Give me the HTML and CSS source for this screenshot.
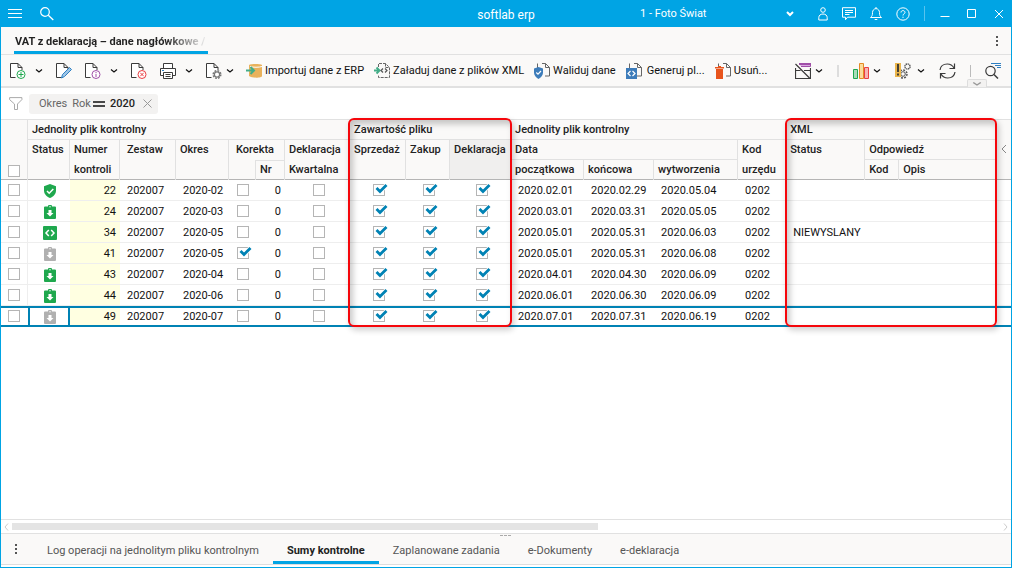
FILE: index.html
```html
<!DOCTYPE html>
<html lang="pl">
<head>
    <meta charset="UTF-8">
    <title>softlab erp</title>
    <link rel="stylesheet" href="styles.css">
</head>
<body>
    <!-- Shared icons -->
    <svg class="sprite" aria-hidden="true">
        <symbol id="doc" viewBox="0 0 16 16"><path d="M5.500 14.500h-5V.5H8l4 4V7M8 .5v4h4" fill="#fff" stroke="#3b3b3b"/></symbol>
        <symbol id="half-doc" viewBox="0 0 16 16"><path d="M3.500 5V.5M8 .5h3.500l4 4v8.500H11M11.500 .5v4h4" fill="none" stroke="#666"/></symbol>
        <symbol id="chevron" viewBox="0 0 8 8"><path d="M1 2.500l3 2.500 3-2.500" fill="none" stroke="currentColor" stroke-width="1.200"/></symbol>
        <symbol id="dots" viewBox="0 0 4 12"><path d="M1 1h2v2H1zM1 5h2v2H1zM1 9h2v2H1z" fill="#555"/></symbol>
        <symbol id="shield" viewBox="0 0 14 14"><path d="M7 0l6 2.300v4.200c0 3.500-2.500 6.300-6 7.500-3.500-1.200-6-4-6-7.500V2.300z" fill="#1fa84e"/><path d="M4 7l2.200 2.200L10.300 5" fill="none" stroke="#fff" stroke-width="1.500"/></symbol>
        <symbol id="clip" viewBox="0 0 14 14"><path d="M2 1.500h3a2 2 0 0 1 4 0h3a1 1 0 0 1 1 1V13a1 1 0 0 1-1 1H2a1 1 0 0 1-1-1V2.500a1 1 0 0 1 1-1z" fill="currentColor"/><path d="M5.500 5h3v3h2L7 11.500 3.500 8h2z" fill="#fff"/><circle cx="7" cy="1.800" r=".7" fill="#fff"/></symbol>
        <symbol id="code" viewBox="0 0 14 14"><rect width="14" height="14" rx="1" fill="#1fa84e"/><path d="M5.800 4L3 7l2.800 3M8.200 4L11 7l-2.800 3" fill="none" stroke="#fff" stroke-width="1.500"/></symbol>
    </svg>

    <div class="window">
        <header class="titlebar">
            <div class="title-left">
                <button class="icon-btn" aria-label="Menu"><svg width="14" height="12" viewBox="0 0 14 12"><path d="M0 1.500h14M0 5.500h14M0 9.500h14" stroke="#fff"/></svg></button>
                <button class="icon-btn" aria-label="Szukaj"><svg width="14" height="14" viewBox="0 0 14 14"><circle cx="5" cy="5" r="4.300" fill="none" stroke="#fff" stroke-width="1.200"/><path d="M8.300 8.300l5 4.700" stroke="#fff" stroke-width="1.300"/></svg></button>
            </div>
            <div class="app-name">softlab erp</div>
            <div class="title-right">
                <select class="company" aria-label="Firma"><option>1 - Foto Świat</option></select>
                <button class="icon-btn" aria-label="Użytkownik"><svg width="10" height="14" viewBox="0 0 10 14" fill="none" stroke="#fff"><circle cx="5" cy="3" r="2.300"/><path d="M.8 13v-2.500C.8 8.500 2.500 7 5 7s4.200 1.500 4.200 3.500V13z"/></svg></button>
                <button class="icon-btn" aria-label="Wiadomości"><svg width="14" height="14" viewBox="0 0 14 14" fill="none" stroke="#fff"><path d="M.5 .7h13v9.500H5.500L3.500 12.700v-2.500h-3zM3 3.500h8M3 5.500h8M3 7.500h4.500"/></svg></button>
                <button class="icon-btn" aria-label="Powiadomienia"><svg width="12" height="14" viewBox="0 0 12 14" fill="none" stroke="#fff"><path d="M.5 10.500c1.500-1.200 2-2 2-5C2.500 3.500 4 1.600 6 1.600s3.500 1.900 3.500 3.900c0 3 .5 3.800 2 5zM4.700 12.500h2.600M6 0v1.500"/></svg></button>
                <button class="icon-btn" aria-label="Pomoc"><svg width="14" height="14" viewBox="0 0 14 14" fill="none" stroke="#fff"><circle cx="7" cy="7" r="6.200"/><path d="M5 5.500C5 4.300 5.900 3.600 7 3.600s2 .8 2 1.800C9 6.800 7 6.800 7 8.500M7 9.700v1.200"/></svg></button>
                <span class="title-sep"></span>
                <button class="icon-btn win" aria-label="Minimalizuj"><svg width="10" height="10" viewBox="0 0 10 10"><path d="M.5 7.500h9" stroke="#fff"/></svg></button>
                <button class="icon-btn win" aria-label="Maksymalizuj"><svg width="10" height="10" viewBox="0 0 10 10"><path d="M.5 .5h8v8h-8z" fill="none" stroke="#fff"/></svg></button>
                <button class="icon-btn win" aria-label="Zamknij"><svg width="10" height="10" viewBox="0 0 10 10"><path d="M1 1l8 8M9 1L1 9" stroke="#fff"/></svg></button>
            </div>
        </header>

        <nav class="tabbar">
            <a href="#" class="page-tab"><span>VAT z deklaracją – dane nagłówkowe /</span></a>
            <button class="icon-btn" aria-label="Więcej"><svg width="4" height="12"><use href="#dots"/></svg></button>
        </nav>

        <div class="toolbar">
            <div class="tools">
                <button class="tool split" aria-label="Dodaj"><svg width="16" height="16" viewBox="0 0 16 16"><use href="#doc"/><circle cx="11" cy="11.500" r="4" fill="#fff" stroke="#1fa84e"/><path d="M11 9v5M8.500 11.500h5" stroke="#1fa84e"/></svg><svg width="8" height="8"><use href="#chevron"/></svg></button>
                <button class="tool" aria-label="Edytuj"><svg width="16" height="16" viewBox="0 0 16 16"><use href="#doc"/><path d="M5.500 15l1-3.500 7-7 2 2-7 7z" fill="#9cc5e8" stroke="#2f7fc1"/></svg></button>
                <button class="tool split" aria-label="Informacje"><svg width="16" height="16" viewBox="0 0 16 16"><use href="#doc"/><circle cx="11" cy="11.500" r="4" fill="#fff" stroke="#a04fa8"/><path d="M11 9v1.200M11 11v3" stroke="#a04fa8"/></svg><svg width="8" height="8"><use href="#chevron"/></svg></button>
                <button class="tool" aria-label="Usuń dokument"><svg width="16" height="16" viewBox="0 0 16 16"><use href="#doc"/><circle cx="11" cy="11.500" r="4" fill="#fff" stroke="#ea3f43"/><path d="M9.300 9.800l3.400 3.400M12.700 9.800l-3.400 3.400" stroke="#ea3f43"/></svg></button>
                <button class="tool split" aria-label="Drukuj"><svg width="16" height="16" viewBox="0 0 16 16" fill="#fff" stroke="#3b3b3b"><path d="M3.500 5V.5h9V5M3.500 12.500h-3v-7h15v7h-3"/><path d="M3.500 9.500h9v6h-9zM5.500 11.500h5M5.500 13.500h5"/><path d="M2 7.500h2" stroke="#2f7fc1"/></svg><svg width="8" height="8"><use href="#chevron"/></svg></button>
                <button class="tool split close" aria-label="Ustawienia dokumentu"><svg width="16" height="16" viewBox="0 0 16 16"><use href="#doc"/><circle cx="11" cy="11.500" r="3.800" fill="none" stroke="#777" stroke-width="1.500" stroke-dasharray="1.800 1.180"/><circle cx="11" cy="11.500" r="2.600" fill="#fff" stroke="#777" stroke-width="1.200"/></svg><svg width="8" height="8"><use href="#chevron"/></svg></button>
            </div>
            <div class="tools actions">
                <button class="tool"><svg width="16" height="16" viewBox="0 0 16 16"><path d="M3 2c0-1.500 13-1.500 13 0v11c0 2-10 2.500-13 0z" fill="#e9b25c"/><path d="M4 3.500c3 1 9 1 12 0" fill="none" stroke="#fff"/><path d="M0 7.500h7M4.500 4L8 7.500 4.500 11" fill="none" stroke="#44ad88" stroke-width="2"/></svg>Importuj dane z ERP</button>
                <button class="tool"><svg width="16" height="16" viewBox="0 0 16 16"><path d="M4.500 4V.5h7l4 4v10h-11V12M11.500 .5v4h4" fill="none" stroke="#666" stroke-dasharray="3 1"/><path d="M0 7.500h5M2.500 4.500l3 3-3 3" fill="none" stroke="#44ad88" stroke-width="2"/><path d="M9 5.500l-2 2 2 2M11 5.500l2 2-2 2" fill="none" stroke="#555" stroke-width="1.200"/></svg>Załaduj dane z plików XML</button>
                <button class="tool"><svg width="16" height="16" viewBox="0 0 16 16"><use href="#half-doc"/><path d="M4.500 4L9 5.500v4c0 3-2 5-4.500 6.500C2 14.500 0 12.500 0 9.500v-4z" fill="#3d7cba"/><path d="M2.300 9.500l1.700 1.700L7 8" fill="none" stroke="#fff" stroke-width="1.200"/></svg>Waliduj dane</button>
                <button class="tool wide"><svg width="16" height="16" viewBox="0 0 16 16"><use href="#half-doc"/><path d="M0 5h11v11H0z" fill="#3d7cba"/><path d="M4.500 8L2 10.500 4.500 13M6.500 8L9 10.500 6.500 13" fill="none" stroke="#fff" stroke-width="1.200"/></svg>Generuj pl...</button>
                <button class="tool"><svg width="16" height="16" viewBox="0 0 16 16"><use href="#half-doc"/><path d="M0 4h3V3h3v1h3v1.500H0zM1 6h7v10H1z" fill="#e8541c"/></svg>Usuń...</button>
            </div>
            <div class="tools extra">
                <button class="tool split close" aria-label="Widok"><svg width="16" height="16" viewBox="0 0 16 16"><path d="M4 .5h11.500v3H6" fill="#d9a9e0" stroke="#a04fa8"/><path d="M4 1h12" stroke="#a04fa8" stroke-width="2"/><path d="M.5 5v10.500h15V5M.5 7.500h5M9 7.500h6.500M.5 1l14 14" fill="none" stroke="#3b3b3b" stroke-width="1.200"/></svg><svg width="8" height="8"><use href="#chevron"/></svg></button>
                <span class="sep thick"></span>
                <button class="tool split close" aria-label="Wykresy"><svg width="16" height="16" viewBox="0 0 16 16"><path d="M.5 6.500h4v9h-4z" fill="#a9dbb9" stroke="#1fa84e"/><path d="M6.500 .5h4v15h-4z" fill="#fbdc9c" stroke="#e58a25"/><path d="M11.500 4.500h4v11h-4z" fill="#f7b3b3" stroke="#ea3f43"/></svg><svg width="8" height="8"><use href="#chevron"/></svg></button>
                <button class="tool split gears" aria-label="Narzędzia"><svg width="16" height="16" viewBox="0 0 16 16"><circle cx="8" cy="11" r="4" fill="none" stroke="#555" stroke-width="1.500" stroke-dasharray="1.900 1.200"/><circle cx="8" cy="11" r="2.300" fill="none" stroke="#555"/><circle cx="12.500" cy="3.500" r="2.600" fill="none" stroke="#555" stroke-width="1.400" stroke-dasharray="1.400 .6"/><path d="M0 0h6v14H0z" fill="#ebb64c"/><path d="M3 1v8M3 10.500v2" stroke="#333" stroke-width="1.800"/></svg><svg width="8" height="8"><use href="#chevron"/></svg></button>
                <button class="tool" aria-label="Odśwież"><svg width="17" height="16" viewBox="0 0 17 16" fill="none" stroke="#3b3b3b" stroke-width="1.200"><path d="M1 7C1.500 3.300 4.500 1 8.300 1c3 0 5.300 1.500 6.700 4M15.500 .5V5.500h-5M16 9c-.5 3.700-3.500 6-7.300 6-3 0-5.300-1.500-6.700-4M1.500 15.500v-5h5"/></svg></button>
                <span class="sep"></span>
                <button class="tool" aria-label="Wyszukiwanie"><svg width="16" height="16" viewBox="0 0 16 16"><circle cx="5.500" cy="8" r="4.700" fill="none" stroke="#3b3b3b" stroke-width="1.200"/><path d="M9 11.500l4 4" stroke="#3b3b3b" stroke-width="1.500"/><path d="M6 .5h10M10 2.500h6M12 4.500h4" stroke="#2f7fc1"/></svg></button>
            </div>
            <button class="collapse" aria-label="Zwiń"><svg width="10" height="8" viewBox="0 0 8 8" preserveAspectRatio="none"><use href="#chevron"/></svg></button>
        </div>

        <div class="filters">
            <svg width="14" height="14" viewBox="0 0 14 14"><path d="M.6 .6h12.300v2L8.500 7v5.500H5.500V7L.6 2.600z" fill="none" stroke="#aaa"/></svg>
            <div class="chip">
                <span>Okres</span><span class="chip-field">Rok</span>
                <svg width="12" height="6" viewBox="0 0 12 6"><path d="M0 1h12M0 5h12" stroke="#111" stroke-width="1.300"/></svg>
                <b>2020</b>
                <button class="icon-btn" aria-label="Usuń filtr"><svg width="9" height="9" viewBox="0 0 9 9"><path d="M.5 .5l8 8M8.500 .5l-8 8" stroke="#999"/></svg></button>
            </div>
        </div>

        <main class="grid">
            <table>
                <colgroup>
                    <col class="w27"><col class="w42"><col class="w50"><col class="w56"><col class="w53"><col class="w26"><col class="w30"><col class="w65">
                    <col class="w56"><col class="w44"><col class="w61">
                    <col class="w73"><col class="w70"><col class="w84"><col class="w48">
                    <col class="w79"><col class="w34"><col class="w98"><col>
                </colgroup>
                <thead>
                    <tr>
                        <th rowspan="3" class="pick-all"><input type="checkbox" aria-label="Zaznacz wszystko"></th>
                        <th colspan="7" class="group">Jednolity plik kontrolny</th>
                        <th colspan="3" class="group">Zawartość pliku</th>
                        <th colspan="4" class="group">Jednolity plik kontrolny</th>
                        <th colspan="3" class="group">XML</th>
                        <th rowspan="3" class="more"><svg width="6" height="10" viewBox="0 0 6 10"><path d="M5 1L1 5l4 4" fill="none" stroke="#888"/></svg></th>
                    </tr>
                    <tr>
                        <th rowspan="2">Status</th>
                        <th rowspan="2">Numer<br>kontroli</th>
                        <th rowspan="2" class="inset">Zestaw</th>
                        <th rowspan="2">Okres</th>
                        <th colspan="2" class="inset">Korekta</th>
                        <th rowspan="2" class="last">Deklaracja<br>Kwartalna</th>
                        <th rowspan="2">Sprzedaż</th>
                        <th rowspan="2">Zakup</th>
                        <th rowspan="2" class="active last">Deklaracja</th>
                        <th colspan="3" class="line">Data</th>
                        <th rowspan="2" class="last">Kod<br>urzędu</th>
                        <th rowspan="2">Status</th>
                        <th colspan="2" class="line last">Odpowiedź</th>
                    </tr>
                    <tr>
                        <th></th>
                        <th class="sub">Nr</th>
                        <th>początkowa</th>
                        <th>końcowa</th>
                        <th>wytworzenia</th>
                        <th>Kod</th>
                        <th class="last">Opis</th>
                    </tr>
                </thead>
                <tbody id="rows"></tbody>
            </table>
            <div class="mark mark-content"></div>
            <div class="mark mark-xml"></div>
        </main>

        <div class="scrollbar">
            <svg width="5" height="8" viewBox="0 0 5 8"><path d="M4 .5L1 4l3 3.500" fill="none" stroke="#ccc"/></svg>
            <div class="track"><div class="thumb"></div></div>
            <svg width="5" height="8" viewBox="0 0 5 8"><path d="M1 .5L4 4 1 7.500" fill="none" stroke="#ccc"/></svg>
        </div>

        <nav class="bottom-tabs">
            <button class="icon-btn" aria-label="Więcej zakładek"><svg width="4" height="12"><use href="#dots"/></svg></button>
            <a href="#">Log operacji na jednolitym pliku kontrolnym</a>
            <a href="#" class="current">Sumy kontrolne</a>
            <a href="#">Zaplanowane zadania</a>
            <a href="#">e-Dokumenty</a>
            <a href="#">e-deklaracja</a>
            <svg class="splitter" width="11" height="2" viewBox="0 0 11 2"><path d="M0 .5h3M4 .5h3M8 .5h3" stroke="#aaa"/></svg>
        </nav>
    </div>

    <script>
        // status icon, number, period, correction, from, to, created, XML status
        const data = [
            ['shield', 22, '2020-02', false, '2020.02.01', '2020.02.29', '2020.05.04', ''],
            ['clip', 24, '2020-03', false, '2020.03.01', '2020.03.31', '2020.05.05', ''],
            ['code', 34, '2020-05', false, '2020.05.01', '2020.05.31', '2020.06.03', 'NIEWYSLANY'],
            ['clip off', 41, '2020-05', true, '2020.05.01', '2020.05.31', '2020.06.08', ''],
            ['clip', 43, '2020-04', false, '2020.04.01', '2020.04.30', '2020.06.09', ''],
            ['clip', 44, '2020-06', false, '2020.06.01', '2020.06.30', '2020.06.09', ''],
            ['clip off', 49, '2020-07', false, '2020.07.01', '2020.07.31', '2020.06.19', '']
        ];

        function box(label, checked) {
            return `<td class="check"><input type="checkbox" aria-label="${label}" ${checked ? 'checked' : ''}></td>`;
        }

        document.getElementById('rows').innerHTML = data.map((row, i) => {
            const [icon, number, period, correction, from, to, created, status] = row;
            return `<tr class="${i === data.length - 1 ? 'selected' : ''}">
                <td class="pick"><input type="checkbox" aria-label="Zaznacz ${number}"></td>
                <td class="status"><svg class="${icon}" width="14" height="14"><use href="#${icon.split(' ')[0]}"/></svg></td>
                <td class="number">${number}</td>
                <td>202007</td>
                <td>${period}</td>
                ${box('Korekta', correction)}
                <td class="right">0</td>
                ${box('Deklaracja kwartalna', false)}
                ${box('Sprzedaż', true)}
                ${box('Zakup', true)}
                ${box('Deklaracja', true)}
                <td>${from}</td>
                <td>${to}</td>
                <td>${created}</td>
                <td>0202</td>
                <td colspan="3">${status}</td>
                <td></td>
            </tr>`;
        }).join('');
    </script>
</body>
</html>
```
FILE: styles.css
```css
* {
    box-sizing: border-box;
}

body {
    margin: 0;
    font-family: Roboto, "Liberation Sans", sans-serif;
    font-size: 11px;
    color: #111111;
}

button {
    font: inherit;
    color: inherit;
    background: none;
    border: none;
    padding: 0;
    cursor: pointer;
}

a {
    color: inherit;
    text-decoration: none;
}

svg {
    display: block;
    flex: none;
}

.sprite {
    position: absolute;
    width: 0;
    height: 0;
}

.window {
    display: flex;
    flex-direction: column;
    min-height: 100vh;
    border: 1px solid #00a4e4;
    border-top: none;
    background-color: #ffffff;
}

/* Title bar */
.titlebar {
    display: grid;
    grid-template-columns: 1fr auto 1fr;
    align-items: center;
    height: 27px;
    padding: 0 7px;
    background-color: #00a4e4;
    color: #ffffff;
}

.title-left {
    display: flex;
    align-items: center;
    gap: 18px;
}

.app-name {
    font-size: 12px;
    padding-top: 2px;
}

.title-right {
    display: flex;
    align-items: center;
    justify-content: flex-end;
    gap: 14px;
}

.company {
    width: 158px;
    margin-right: 6px;
    padding: 0;
    border: none;
    appearance: none;
    font: inherit;
    color: #ffffff;
    background: url("data:image/svg+xml,%3Csvg xmlns='http://www.w3.org/2000/svg' width='8' height='8'%3E%3Cpath d='M1 2l3 3 3-3' fill='none' stroke='white' stroke-width='2'/%3E%3C/svg%3E") no-repeat right 4px center;
}

.title-sep {
    width: 1px;
    height: 15px;
    margin-right: 1px;
    background-color: #58c3ee;
}

.win {
    margin-right: 3px;
}

.win:last-child {
    margin-right: 0;
}

/* Page tab */
.tabbar {
    display: flex;
    justify-content: space-between;
    align-items: center;
    height: 28px;
    padding: 0 12px 0 13px;
    background-color: #faf9f8;
    border-bottom: 1px solid #e1e1e1;
}

.page-tab {
    width: 194px;
    height: 27px;
    padding-left: 1px;
    line-height: 29px;
    border-bottom: 3px solid #00a4e4;
    font-weight: bold;
    white-space: nowrap;
    overflow: hidden;
}

.page-tab span {
    background: linear-gradient(90deg, #222222 150px, #e8e8e8 190px);
    background-clip: text;
    color: transparent;
}

/* Toolbar */
.toolbar {
    position: relative;
    display: flex;
    align-items: center;
    gap: 12px;
    height: 33px;
    padding: 0 10px 0 9px;
    background-color: #faf9f8;
    border-bottom: 2px solid #e1e1e1;
}

.tools {
    display: flex;
    align-items: center;
    gap: 13px;
}

.tools.actions {
    gap: 10px;
}

.tools.extra {
    gap: 14px;
    margin-left: auto;
}

.tool {
    display: flex;
    align-items: center;
    gap: 3px;
    white-space: nowrap;
}

.tool.split {
    gap: 9px;
}

.tool.wide {
    gap: 5px;
}

.tool.split.close {
    gap: 4px;
}

.tool.split.gears {
    gap: 6px;
}

.sep {
    width: 1px;
    height: 12px;
    background-color: #bbbbbb;
}

.sep.thick {
    width: 2px;
    background-color: #dddddd;
}

.collapse {
    position: absolute;
    right: 24px;
    bottom: -1px;
    display: flex;
    justify-content: center;
    width: 20px;
    height: 8px;
    background-color: #f3f2f1;
    border: 1px solid #dddddd;
    border-bottom: none;
    border-radius: 2px 2px 0 0;
    color: #999999;
}

/* Filters */
.filters {
    display: flex;
    align-items: center;
    gap: 6px;
    height: 31px;
    padding: 0 8px;
}

.chip {
    display: flex;
    align-items: center;
    height: 20px;
    padding: 0 6px 0 10px;
    background-color: #f3f2f1;
    border-radius: 3px;
    color: #666666;
}

.chip-field {
    margin: 0 2px 0 5px;
}

.chip b {
    margin: 0 8px 0 5px;
    font-weight: 500;
    color: #222222;
}

/* Data grid */
.grid {
    position: relative;
    flex: 1;
}

table {
    width: 100%;
    table-layout: fixed;
    border-spacing: 0;
}

.w26 { width: 26px; }
.w27 { width: 27px; }
.w30 { width: 30px; }
.w34 { width: 34px; }
.w42 { width: 42px; }
.w44 { width: 44px; }
.w48 { width: 48px; }
.w50 { width: 50px; }
.w53 { width: 53px; }
.w56 { width: 56px; }
.w61 { width: 61px; }
.w65 { width: 65px; }
.w70 { width: 70px; }
.w73 { width: 73px; }
.w79 { width: 79px; }
.w84 { width: 84px; }
.w98 { width: 98px; }

thead {
    background-color: #faf9f8;
}

thead tr {
    height: 20px;
}

th {
    padding: 0 0 0 4px;
    font-weight: 500;
    line-height: 19px;
    text-align: left;
    vertical-align: top;
    white-space: nowrap;
    color: #222222;
    border-right: 1px solid #e1e1e1;
}

th[rowspan="2"] {
    line-height: 20px;
}

th[rowspan],
thead tr:last-child th {
    box-shadow: inset 0 -1px #b5b5b5;
}

th.group {
    padding-top: 1px;
    border-top: 1px solid #e1e1e1;
    border-bottom: 1px solid #e1e1e1;
    line-height: 18px;
}

th.group,
th.last {
    border-right-color: #eeeeee;
}

th.line {
    border-bottom: 1px solid #e1e1e1;
}

th.inset {
    padding-left: 7px;
}

th.active {
    background-color: #f0efee;
}

th.sub {
    border-top: 1px solid #e1e1e1;
    border-left: 1px solid #e1e1e1;
    line-height: 18px;
}

th:has(+ .sub) {
    border-right: none;
}

th.pick-all {
    padding: 0 0 3px 7px;
    vertical-align: bottom;
    border-top: 1px solid #e1e1e1;
}

th.pick-all input {
    display: block;
}

th.more {
    padding: 24px 0 0 4px;
    border-top: 1px solid #e1e1e1;
    border-right: none;
}

td {
    height: 21px;
    padding: 0 0 0 7px;
    line-height: 17px;
    white-space: nowrap;
    border-bottom: 1px solid #eeeeee;
}

td.pick {
    padding-bottom: 2px;
    border-right: 1px solid #eeeeee;
}

td.status svg {
    margin: 1px 0 0 8px;
    color: #1fa84e;
}

td.status svg.off {
    color: #b0b0b0;
}

td.number,
td.right {
    padding: 0 4px 0 0;
    text-align: right;
}

td.number {
    background-color: #ffffe1;
}

td.check {
    padding: 0 0 2px 2px;
    text-align: center;
}

.selected td {
    line-height: 15px;
    border-top: 2px solid #0082b4;
    border-bottom: 2px solid #0082b4;
}

.selected td.pick {
    border-right: none;
}

.selected td.status {
    padding-left: 5px;
    border-left: 2px solid #0082b4;
    border-right: 2px solid #0082b4;
}

input[type="checkbox"] {
    position: relative;
    display: inline-block;
    appearance: none;
    width: 12px;
    height: 12px;
    margin: 0;
    vertical-align: middle;
    background-color: #ffffff;
    border: 1px solid #b5b5b5;
}

input[type="checkbox"]:checked::after {
    content: "";
    position: absolute;
    top: -2px;
    left: 1px;
    width: 13px;
    height: 11px;
    background: url("data:image/svg+xml,%3Csvg xmlns='http://www.w3.org/2000/svg' width='13' height='11'%3E%3Cpath d='M1.500 5l3.500 3.500 6.500-6.500' fill='none' stroke='white' stroke-width='4.500'/%3E%3Cpath d='M1.500 5l3.500 3.500 6.500-6.500' fill='none' stroke='%230082b4' stroke-width='2.800'/%3E%3C/svg%3E") no-repeat;
}

/* Frames drawn over the highlighted column groups */
.mark {
    position: absolute;
    top: -1px;
    height: 209px;
    border: 2px solid #f5060b;
    border-radius: 6px;
    box-shadow: 2px 3px 6px rgba(0, 0, 0, 0.2), inset 3px 4px 6px rgba(0, 0, 0, 0.22);
    pointer-events: none;
}

.mark-content {
    left: 347px;
    width: 164px;
}

.mark-xml {
    left: 784px;
    width: 212px;
}

/* Horizontal scrollbar */
.scrollbar {
    display: flex;
    align-items: center;
    gap: 3px;
    height: 15px;
    padding: 0 3px;
    border-top: 1px solid #e1e1e1;
    border-bottom: 1px solid #e1e1e1;
}

.track {
    flex: 1;
}

.thumb {
    width: 59.3%;
    height: 7px;
    background-color: #e4e4e4;
}

/* Bottom tabs */
.bottom-tabs {
    position: relative;
    display: flex;
    align-items: center;
    height: 31px;
    margin-bottom: 2px;
    padding-left: 13px;
    background-color: #faf9f8;
    border-bottom: 1px solid #dddddd;
    color: #555555;
}

.bottom-tabs a {
    height: 30px;
    padding: 0 14px;
    line-height: 33px;
}

.bottom-tabs .icon-btn {
    margin-right: 15px;
}

.bottom-tabs a.current {
    border-bottom: 3px solid #00a4e4;
    font-weight: bold;
    color: #222222;
}

.splitter {
    position: absolute;
    top: 1px;
    left: calc(50% - 6px);
}
```
